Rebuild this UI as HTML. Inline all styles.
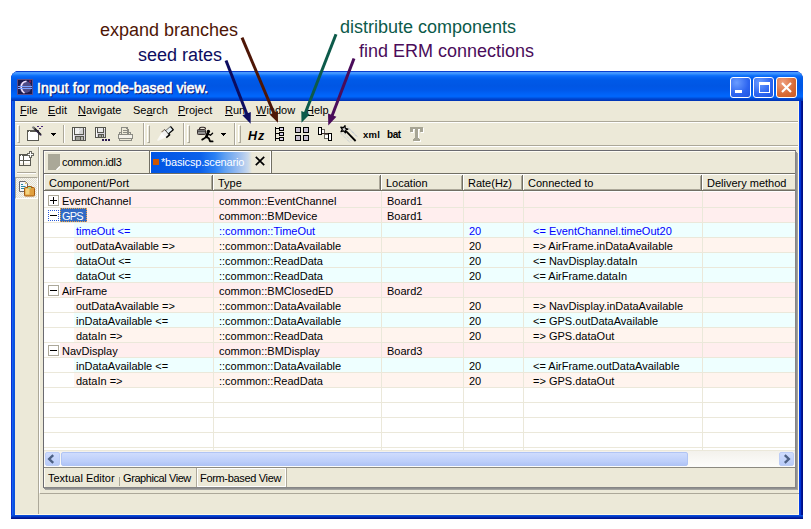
<!DOCTYPE html><html><head><meta charset="utf-8"><style>
*{margin:0;padding:0;box-sizing:border-box}
html,body{width:811px;height:529px;overflow:hidden;background:#fff}
body{position:relative;font-family:"Liberation Sans",sans-serif;font-size:11px;color:#000}
.a{position:absolute}
.t{position:absolute;white-space:nowrap;line-height:13px;font-size:11px}
.ann{position:absolute;font-size:18px;white-space:nowrap;line-height:1}
.grip{position:absolute;top:125px;width:3px;height:18px;border-left:1px solid #fff;border-top:1px solid #fff;border-right:1px solid #aca899;border-bottom:1px solid #aca899}
.sep{position:absolute;top:123px;width:2px;height:22px;border-left:1px solid #aca899;border-right:1px solid #fff}
.u{text-decoration:underline}
</style></head><body>
<div class="ann" style="left:100px;top:21px;color:#4e1606">expand branches</div>
<div class="ann" style="left:138px;top:46px;color:#0c0c60">seed rates</div>
<div class="ann" style="left:340px;top:18px;color:#0c5a4a">distribute components</div>
<div class="ann" style="left:359px;top:42px;color:#4a0c5a">find ERM connections</div>
<div class="a" style="left:11px;top:71px;width:792px;height:448px;background:#001a98;border-radius:8px 8px 0 0"></div>
<div class="a" style="left:11px;top:71px;width:791px;height:447px;background:#0a2fd0;border-radius:8px 8px 0 0"></div>
<div class="a" style="left:12px;top:72px;width:789px;height:445px;background:#1660f0;border-radius:7px 7px 0 0"></div>
<div class="a" style="left:13px;top:73px;width:787px;height:443px;background:#0a52e0;border-radius:6px 6px 0 0"></div>
<div class="a" style="left:801px;top:80px;width:2px;height:439px;background:linear-gradient(90deg,#0018a0,#000c80)"></div>
<div class="a" style="left:799px;top:100px;width:2px;height:419px;background:linear-gradient(90deg,#0040f0,#0030d0)"></div>
<div class="a" style="left:11px;top:515px;width:792px;height:4px;background:linear-gradient(#0852e0,#0844d2 1px,#0030b8 2px,#001a98 3px,#000c80)"></div>
<div class="a" style="left:11px;top:71px;width:792px;height:30px;border-radius:8px 8px 0 0;background:linear-gradient(#0a3fd0 0px,#0a3fd0 1px,#4a9cff 1px,#3a90ff 3px,#1478fc 4px,#0664f4 6px,#005ae8 9px,#0056e4 15px,#0058ea 19px,#0060f4 22px,#0066fc 25px,#0064f8 26px,#0050dc 27px,#0040c8 28.5px,#0030b0 30px)"></div>
<svg class="a" style="left:17px;top:79px" width="16" height="16" viewBox="0 0 16 16"><rect x="0.5" y="0.5" width="15" height="15" fill="#1c1a4c" stroke="#5a4a8a"/><circle cx="8.5" cy="8" r="6" fill="#4e4c88"/><path d="M9.5 2.3 Q4.5 3 4.2 8 Q4.5 12.5 7.5 14" stroke="#f4e4ff" stroke-width="1.6" fill="none"/><rect x="1" y="7" width="14" height="1" fill="#7aa0ff"/><rect x="1" y="9" width="14" height="1" fill="#7aa0ff"/><rect x="12" y="1.5" width="2" height="2" fill="#8a1a50"/></svg>
<div class="t" style="left:38px;top:82px;font-size:14px;line-height:15px;letter-spacing:0.12px;-webkit-text-stroke:0.6px #0a1a70;color:#0a1a70">Input for mode-based view.</div>
<div class="t" style="left:37px;top:81px;font-size:14px;line-height:15px;letter-spacing:0.12px;-webkit-text-stroke:0.6px #fff;color:#fff">Input for mode-based view.</div>
<div class="a" style="left:730px;top:77px;width:21px;height:21px;border:1px solid #fff;border-radius:3px;background:radial-gradient(circle at 30% 25%,#6a9cff,#2c64f0 60%,#1f56e0)"></div>
<div class="a" style="left:753px;top:77px;width:21px;height:21px;border:1px solid #fff;border-radius:3px;background:radial-gradient(circle at 30% 25%,#6a9cff,#2c64f0 60%,#1f56e0)"></div>
<div class="a" style="left:776px;top:77px;width:21px;height:21px;border:1px solid #fff;border-radius:3px;background:radial-gradient(circle at 30% 25%,#f0a080,#d86a35 60%,#c85a25)"></div>
<div class="a" style="left:735px;top:90px;width:7px;height:3px;background:#fff"></div>
<div class="a" style="left:759px;top:82px;width:11px;height:11px;border:1px solid #fff;border-top-width:3px"></div>
<svg class="a" style="left:776px;top:77px" width="21" height="21"><path d="M6 6 L15 15 M15 6 L6 15" stroke="#fff" stroke-width="2.2"/></svg>
<div class="a" style="left:15px;top:101px;width:784px;height:414px;background:#ece9d8"></div>
<div class="t" style="left:20px;top:104px"><span class="u">F</span>ile</div>
<div class="t" style="left:48px;top:104px"><span class="u">E</span>dit</div>
<div class="t" style="left:78px;top:104px"><span class="u">N</span>avigate</div>
<div class="t" style="left:133px;top:104px">Se<span class="u">a</span>rch</div>
<div class="t" style="left:178px;top:104px"><span class="u">P</span>roject</div>
<div class="t" style="left:225px;top:104px"><span class="u">R</span>un</div>
<div class="t" style="left:256px;top:104px"><span class="u">W</span>indow</div>
<div class="t" style="left:306px;top:104px"><span class="u">H</span>elp</div>
<div class="a" style="left:15px;top:121px;width:784px;height:1px;background:#aca899"></div>
<div class="a" style="left:15px;top:122px;width:784px;height:1px;background:#fff"></div>
<div class="a" style="left:15px;top:145px;width:784px;height:1px;background:#aca899"></div>
<div class="a" style="left:15px;top:146px;width:784px;height:1px;background:#fff"></div>
<div class="grip" style="left:17px"></div>
<div class="grip" style="left:147px"></div>
<div class="grip" style="left:187px"></div>
<div class="grip" style="left:238px"></div>
<div class="a" style="left:63px;top:125px;width:1px;height:18px;background:#aca899"></div>
<div class="a" style="left:64px;top:125px;width:1px;height:18px;background:#fff"></div>
<div class="sep" style="left:143px"></div>
<div class="sep" style="left:183px"></div>
<div class="sep" style="left:234px"></div>
<svg class="a" style="left:26px;top:126px" width="18" height="16" viewBox="0 0 18 16" shape-rendering="crispEdges"><rect x="1" y="4" width="12" height="11" fill="#5a5a52"/><rect x="2" y="6" width="10" height="8" fill="#fff"/><rect x="2" y="5" width="10" height="1" fill="#5a5a52"/><rect x="3" y="5" width="1" height="1" fill="#fff"/></svg>
<svg class="a" style="left:26px;top:126px" width="18" height="16" viewBox="0 0 18 16" ><line x1="7.5" y1="1.5" x2="15" y2="9" stroke="#1a1a1a" stroke-width="2"/><line x1="6.5" y1="0.8" x2="8.5" y2="2.8" stroke="#808080" stroke-width="2"/><line x1="9" y1="3.5" x2="15.5" y2="10" stroke="#5a3a90" stroke-width="0.6"/><rect x="11" y="0" width="2" height="1" fill="#4a2a7a"/><rect x="15" y="0" width="2" height="1" fill="#4a2a7a"/><rect x="13" y="2" width="2" height="1" fill="#4a2a7a"/></svg>
<svg class="a" style="left:51px;top:133px" width="5" height="3" viewBox="0 0 5 3" shape-rendering="crispEdges"><rect x="0" y="0" width="5" height="1" fill="#000"/><rect x="1" y="1" width="3" height="1" fill="#000"/><rect x="2" y="2" width="1" height="1" fill="#000"/></svg>
<svg class="a" style="left:72px;top:127px" width="14" height="14" viewBox="0 0 14 14" shape-rendering="crispEdges"><rect x="0" y="0" width="14" height="14" fill="#55554e"/><rect x="1" y="1" width="12" height="12" fill="#d8d4dc"/><rect x="1" y="1" width="1" height="12" fill="#fafafa"/><rect x="2" y="0" width="10" height="8" fill="#55554e"/><rect x="3" y="1" width="8" height="6" fill="#f0f0f0"/><rect x="7" y="1" width="4" height="6" fill="#d4d4d4"/><rect x="12" y="1" width="1" height="1" fill="#fff"/><rect x="3" y="9" width="9" height="5" fill="#55554e"/><rect x="4" y="10" width="4" height="3" fill="#a0a09a"/><rect x="9" y="10" width="2" height="3" fill="#b8b8b4"/></svg>
<svg class="a" style="left:72px;top:127px" width="14" height="14" viewBox="0 0 14 14" ><line x1="5" y1="6" x2="10" y2="1.5" stroke="#fff" stroke-width="1" stroke-dasharray="1 0.5"/></svg>
<svg class="a" style="left:95px;top:127px" width="16" height="15" viewBox="0 0 16 15" shape-rendering="crispEdges"><rect x="0" y="0" width="11" height="11" fill="#55554e"/><rect x="1" y="1" width="9" height="9" fill="#d8d4dc"/><rect x="1" y="1" width="1" height="9" fill="#fafafa"/><rect x="2" y="0" width="7" height="6" fill="#55554e"/><rect x="3" y="1" width="5" height="4" fill="#e8e8e8"/><rect x="9" y="1" width="1" height="1" fill="#fff"/><rect x="3" y="7" width="6" height="4" fill="#55554e"/><rect x="4" y="8" width="2" height="2" fill="#a0a09a"/><rect x="7" y="8" width="1" height="2" fill="#b8b8b4"/><rect x="7" y="12" width="2" height="2" fill="#2a1a50"/><rect x="10" y="12" width="2" height="2" fill="#2a1a50"/><rect x="13" y="12" width="2" height="2" fill="#2a1a50"/></svg>
<svg class="a" style="left:118px;top:127px" width="15" height="14" viewBox="0 0 15 14" shape-rendering="crispEdges"><rect x="3" y="0" width="7" height="1" fill="#8c8c84"/><rect x="3" y="0" width="1" height="7" fill="#8c8c84"/><rect x="9" y="1" width="1" height="6" fill="#8c8c84"/><rect x="10" y="2" width="1" height="5" fill="#8c8c84"/><rect x="5" y="3" width="4" height="1" fill="#8c8c84"/><rect x="5" y="5" width="4" height="1" fill="#8c8c84"/><rect x="8" y="1" width="1" height="1" fill="#8c8c84"/><rect x="1" y="5" width="3" height="1" fill="#8c8c84"/><rect x="1" y="5" width="1" height="2" fill="#8c8c84"/><rect x="10" y="5" width="3" height="1" fill="#8c8c84"/><rect x="12" y="5" width="1" height="2" fill="#8c8c84"/><rect x="5" y="7" width="4" height="1" fill="#8c8c84"/><rect x="0" y="7" width="15" height="1" fill="#8c8c84"/><rect x="0" y="7" width="1" height="5" fill="#8c8c84"/><rect x="14" y="7" width="1" height="5" fill="#8c8c84"/><rect x="0" y="11" width="15" height="1" fill="#8c8c84"/><rect x="1" y="8" width="13" height="3" fill="#f4f2ea"/><rect x="1" y="12" width="1" height="2" fill="#8c8c84"/><rect x="13" y="12" width="1" height="2" fill="#8c8c84"/><rect x="1" y="13" width="13" height="1" fill="#8c8c84"/></svg>
<svg class="a" style="left:150px;top:120px" width="30" height="26" viewBox="0 0 30 26" ><defs><linearGradient id="bm" x1="0" x2="1"><stop offset="0" stop-color="#ffffff" stop-opacity="0.6"/><stop offset="1" stop-color="#fdfdfd"/></linearGradient></defs><g transform="translate(7.5,20.5) rotate(-41)"><polygon points="0,-0.6 8.5,-3.2 8.5,3.2 0,0.6" fill="url(#bm)"/><rect x="8.5" y="-3.6" width="4.5" height="7.2" fill="#f2f2f2"/><line x1="8.5" y1="-3.6" x2="13" y2="-3.6" stroke="#8a7a6a" stroke-width="1"/><line x1="8.5" y1="3.6" x2="13.5" y2="3.6" stroke="#000" stroke-width="1.4"/><line x1="13" y1="3.6" x2="13" y2="1.5" stroke="#000" stroke-width="1.4"/><rect x="13" y="-2" width="6" height="4" fill="#e4eef2"/><line x1="13" y1="2.2" x2="19" y2="2.2" stroke="#000" stroke-width="1.3"/><line x1="19" y1="-2.2" x2="19" y2="2.5" stroke="#000" stroke-width="1.3"/><line x1="13" y1="-2.1" x2="19" y2="-2.1" stroke="#5a5a5a" stroke-width="0.8"/><line x1="12.6" y1="-3.6" x2="12.6" y2="3.6" stroke="#2a2a2a" stroke-width="0.8"/></g></svg>
<svg class="a" style="left:194px;top:124px" width="22" height="20" viewBox="0 0 22 20" ><path d="M5.5 5.2 Q5.5 3.3 7.5 3.3 H9.5 Q11.5 3.3 11.5 5.2" stroke="#2a2020" stroke-width="1.1" fill="none"/><rect x="3.5" y="5.5" width="8" height="5" rx="0.8" fill="#a4a4a4" stroke="#3a3030" stroke-width="1"/><rect x="3.2" y="6.6" width="8.6" height="1.1" fill="#303030"/><rect x="4" y="8.5" width="7" height="1.5" fill="#8a8a8a"/><circle cx="14.4" cy="7.4" r="1.7" fill="#000"/><path d="M13.8 9.3 L12.4 12.8" stroke="#000" stroke-width="2.8" stroke-linecap="round"/><path d="M14 10 L16.5 11.2 L18.6 9.2" stroke="#000" stroke-width="1.3" fill="none" stroke-linecap="round"/><path d="M12.4 12.8 L10 14.6 L8.2 15.6" stroke="#000" stroke-width="1.8" fill="none" stroke-linecap="round"/><path d="M12.4 12.8 L15 14.6 L16 17.3 L18.6 17.4" stroke="#000" stroke-width="1.8" fill="none" stroke-linecap="round" stroke-linejoin="round"/></svg>
<svg class="a" style="left:221px;top:133px" width="5" height="3" viewBox="0 0 5 3" shape-rendering="crispEdges"><rect x="0" y="0" width="5" height="1" fill="#000"/><rect x="1" y="1" width="3" height="1" fill="#000"/><rect x="2" y="2" width="1" height="1" fill="#000"/></svg>
<div class="t" style="left:248px;top:129px;font-weight:bold;font-style:italic;font-size:12.5px;line-height:14px;letter-spacing:1px">Hz</div>
<svg class="a" style="left:275px;top:127px" width="10" height="14" viewBox="0 0 10 14" shape-rendering="crispEdges"><rect x="0" y="0" width="1" height="14" fill="#000"/><rect x="1" y="1" width="3" height="1" fill="#000"/><rect x="1" y="6" width="3" height="1" fill="#000"/><rect x="1" y="11" width="3" height="1" fill="#000"/><rect x="4" y="0" width="5" height="4" fill="#000"/><rect x="5" y="1" width="3" height="2" fill="#d8d0e8"/><rect x="4" y="5" width="5" height="4" fill="#000"/><rect x="5" y="6" width="3" height="2" fill="#d8d0e8"/><rect x="4" y="10" width="5" height="4" fill="#000"/><rect x="5" y="11" width="3" height="2" fill="#d8d0e8"/></svg>
<svg class="a" style="left:295px;top:127px" width="14" height="14" viewBox="0 0 14 14" shape-rendering="crispEdges"><rect x="0" y="0" width="6" height="6" fill="#000"/><rect x="1" y="1" width="4" height="4" fill="#c8c0d0"/><rect x="0" y="8" width="6" height="6" fill="#000"/><rect x="1" y="9" width="4" height="4" fill="#c8c0d0"/><rect x="8" y="0" width="6" height="6" fill="#000"/><rect x="9" y="1" width="4" height="4" fill="#c8c0d0"/><rect x="8" y="8" width="6" height="6" fill="#000"/><rect x="9" y="9" width="4" height="4" fill="#c8c0d0"/></svg>
<svg class="a" style="left:318px;top:127px" width="14" height="14" viewBox="0 0 14 14" shape-rendering="crispEdges"><rect x="3" y="2" width="4" height="5" fill="#6a6a60"/><rect x="4" y="3" width="2" height="3" fill="#fff"/><rect x="6" y="7" width="5" height="5" fill="#6a6a60"/><rect x="7" y="8" width="3" height="3" fill="#fff"/><rect x="4" y="6" width="7" height="1" fill="#3a2a2a"/><rect x="0" y="0" width="4" height="8" fill="#000"/><rect x="1" y="1" width="2" height="6" fill="#fff"/><rect x="10" y="6" width="4" height="8" fill="#000"/><rect x="11" y="7" width="2" height="6" fill="#fff"/></svg>
<svg class="a" style="left:338px;top:124px" width="20" height="20" viewBox="0 0 20 20" ><path d="M2.5 9 L12.5 19 M4 7.5 L14 17.5 M9 2.5 L19 12.5 M10.5 4 L19.5 13" stroke="#b4c0d0" stroke-width="1" stroke-dasharray="1 1"/><path d="M8 7.2 L17.6 17" stroke="#000" stroke-width="1.8"/><polygon points="7.01,1.53 7.32,4.23 9.89,5.10 7.43,6.23 7.40,8.94 5.56,6.94 2.97,7.75 4.30,5.39 2.73,3.18 5.39,3.71" fill="#d0d0d0" stroke="#000" stroke-width="1.2" stroke-linejoin="round"/></svg>
<div class="t" style="left:363px;top:129px;font-weight:bold;font-size:9.5px;line-height:12px;letter-spacing:0.2px">xml</div>
<div class="t" style="left:387px;top:128px;font-weight:bold;font-size:10px;line-height:13px;letter-spacing:-0.4px">bat</div>
<svg class="a" style="left:410px;top:127px" width="15" height="16" viewBox="0 0 15 16" shape-rendering="crispEdges"><rect x="1" y="1" width="13" height="2" fill="#ffffff"/><rect x="1" y="3" width="3" height="3" fill="#ffffff"/><rect x="11" y="3" width="3" height="3" fill="#ffffff"/><rect x="6" y="3" width="3" height="11" fill="#ffffff"/><rect x="5" y="12" width="5" height="1" fill="#ffffff"/><rect x="4" y="13" width="7" height="2" fill="#ffffff"/><rect x="0" y="0" width="13" height="2" fill="#a6a494"/><rect x="0" y="2" width="3" height="3" fill="#a6a494"/><rect x="10" y="2" width="3" height="3" fill="#a6a494"/><rect x="5" y="2" width="3" height="11" fill="#a6a494"/><rect x="4" y="11" width="5" height="1" fill="#a6a494"/><rect x="3" y="12" width="7" height="2" fill="#a6a494"/></svg>
<div class="a" style="left:38px;top:147px;width:1px;height:367px;background:#aca899"></div>
<div class="a" style="left:39px;top:147px;width:1px;height:346px;background:#fff"></div>
<svg class="a" style="left:19px;top:154px" width="12" height="12" viewBox="0 0 12 12" shape-rendering="crispEdges"><rect x="0" y="0" width="12" height="12" fill="#5a5a52"/><rect x="1" y="2" width="10" height="9" fill="#fff"/><rect x="1" y="1" width="10" height="1" fill="#5a5a52"/><rect x="2" y="1" width="1" height="1" fill="#fff"/><rect x="4" y="2" width="1" height="9" fill="#5a5a52"/><rect x="1" y="6" width="10" height="1" fill="#5a5a52"/><rect x="1" y="9" width="3" height="2" fill="#f4efe4"/><rect x="5" y="9" width="6" height="2" fill="#f4efe4"/></svg>
<svg class="a" style="left:27px;top:151px" width="7" height="7" viewBox="0 0 7 7" shape-rendering="crispEdges"><rect x="2" y="0" width="3" height="7" fill="#6a6a62"/><rect x="0" y="2" width="7" height="3" fill="#6a6a62"/><rect x="3" y="1" width="1" height="5" fill="#fff"/><rect x="1" y="3" width="5" height="1" fill="#fff"/></svg>
<div class="a" style="left:17px;top:172px;width:19px;height:1px;background:#aca899"></div>
<div class="a" style="left:17px;top:173px;width:19px;height:1px;background:#fff"></div>
<div class="a" style="left:15px;top:177px;width:23px;height:22px;border-top:1px solid #aca899;border-left:1px solid #aca899;border-right:1px solid #fff;border-bottom:1px solid #fff;background:repeating-conic-gradient(#f7f6f0 0 25%,#e2dfd0 0 50%) 0 0/2px 2px"></div>
<svg class="a" style="left:19px;top:181px" width="17" height="16" viewBox="0 0 17 16" ><path d="M0.5 0.5 H6.5 L8.5 2.5 V10.5 H0.5 Z" fill="#f4f6fa" stroke="#6a6a70"/><circle cx="6.8" cy="2.2" r="0.9" fill="#e8c060"/><path d="M2 3.5 H4 M2 5.5 H6.5 M2 7.5 H6.5" stroke="#2a8aa0" stroke-width="1"/><rect x="5.5" y="6.5" width="10" height="8.5" rx="1" fill="#e0a040" stroke="#a85c10"/><rect x="6.5" y="7.5" width="4" height="6" fill="#f8e090" opacity="0.8"/><path d="M8.5 6.5 V5.5 H12.5 V6.5" stroke="#a85c10" fill="none"/><rect x="9" y="6" width="3" height="1.5" fill="#a0d890"/></svg>
<div class="a" style="left:45px;top:153px;width:753px;height:337px;background:#a4a4a0"></div>
<div class="a" style="left:44px;top:152px;width:753px;height:337px;background:#909090"></div>
<div class="a" style="left:43px;top:150px;width:753px;height:338px;background:#ece9d8;border-left:1px solid #6a6a70;border-top:1px solid #6a6a70;border-right:1px solid #858585;border-bottom:1px solid #858585"></div>
<div class="a" style="left:44px;top:151px;width:751px;height:336px;border-left:1px solid #fffdf4;border-top:1px solid #fffdf4"></div>
<div class="a" style="left:798px;top:101px;width:1px;height:414px;background:#fff8e4"></div>
<div class="a" style="left:15px;top:514px;width:784px;height:1px;background:#fff8e4"></div>
<div class="a" style="left:44px;top:173px;width:751px;height:1px;background:#716f64"></div>
<div class="a" style="left:44px;top:174px;width:751px;height:1px;background:#fff"></div>
<svg class="a" style="left:48px;top:154px" width="12" height="16" viewBox="0 0 12 16" ><path d="M0 0 H12 V12 L8 16 H0 Z" fill="#aaa898"/><path d="M12 12.5 L8.5 16" stroke="#fff" stroke-width="1.2"/></svg>
<div class="t" style="left:62px;top:156px;font-size:11px;letter-spacing:-0.25px">common.idl3</div>
<div class="a" style="left:149px;top:150px;width:1px;height:23px;background:#716f64"></div>
<div class="a" style="left:150px;top:151px;width:121px;height:22px;background:#fff"></div>
<div class="a" style="left:149px;top:150px;width:123px;height:1px;background:#716f64"></div>
<div class="a" style="left:151px;top:152px;width:119px;height:21px;background:linear-gradient(90deg,#0054e3 0px,#0a60ea 49px,#2a80f4 64px,#60a0f0 74px,#98bcf0 87px,#c8d8ec 97px,#ece9d8 101px)"></div>
<div class="a" style="left:271px;top:150px;width:1px;height:23px;background:#716f64"></div>
<div class="a" style="left:153px;top:159px;width:6px;height:6px;background:#cc5500"></div>
<div class="t" style="left:161px;top:156px;color:#fff;letter-spacing:-0.18px">*basicsp.scenario</div>
<svg class="a" style="left:255px;top:156px" width="10" height="10" viewBox="0 0 10 10" ><path d="M0.8 0.8 L9.2 9.2 M9.2 0.8 L0.8 9.2" stroke="#000" stroke-width="1.7"/></svg>
<div class="a" style="left:44px;top:175px;width:751px;height:15px;background:#ece9d8"></div>
<div class="a" style="left:44px;top:189px;width:751px;height:1px;background:#aca899"></div>
<div class="a" style="left:44px;top:190px;width:751px;height:1px;background:#716f64"></div>
<div class="t" style="left:49px;top:177px">Component/Port</div>
<div class="a" style="left:211px;top:176px;width:1px;height:13px;background:#aca899"></div>
<div class="a" style="left:212px;top:175px;width:1px;height:15px;background:#716f64"></div>
<div class="a" style="left:213px;top:175px;width:1px;height:15px;background:#fff"></div>
<div class="t" style="left:218px;top:177px">Type</div>
<div class="a" style="left:379px;top:176px;width:1px;height:13px;background:#aca899"></div>
<div class="a" style="left:380px;top:175px;width:1px;height:15px;background:#716f64"></div>
<div class="a" style="left:381px;top:175px;width:1px;height:15px;background:#fff"></div>
<div class="t" style="left:386px;top:177px">Location</div>
<div class="a" style="left:461px;top:176px;width:1px;height:13px;background:#aca899"></div>
<div class="a" style="left:462px;top:175px;width:1px;height:15px;background:#716f64"></div>
<div class="a" style="left:463px;top:175px;width:1px;height:15px;background:#fff"></div>
<div class="t" style="left:468px;top:177px">Rate(Hz)</div>
<div class="a" style="left:521px;top:176px;width:1px;height:13px;background:#aca899"></div>
<div class="a" style="left:522px;top:175px;width:1px;height:15px;background:#716f64"></div>
<div class="a" style="left:523px;top:175px;width:1px;height:15px;background:#fff"></div>
<div class="t" style="left:528px;top:177px">Connected to</div>
<div class="a" style="left:700px;top:176px;width:1px;height:13px;background:#aca899"></div>
<div class="a" style="left:701px;top:175px;width:1px;height:15px;background:#716f64"></div>
<div class="a" style="left:702px;top:175px;width:1px;height:15px;background:#fff"></div>
<div class="t" style="left:707px;top:177px">Delivery method</div>
<div class="a" style="left:44px;top:175px;width:1px;height:15px;background:#fff"></div>
<div class="a" style="left:44px;top:191px;width:751px;height:260px;background:#fff"></div>
<div class="a" style="left:60px;top:192px;width:735px;height:15px;background:#ffeeee"></div>
<div class="a" style="left:60px;top:207px;width:735px;height:15px;background:#ffeeee"></div>
<div class="a" style="left:74px;top:222px;width:721px;height:15px;background:#eeffff"></div>
<div class="a" style="left:74px;top:237px;width:721px;height:15px;background:#fff4ee"></div>
<div class="a" style="left:74px;top:252px;width:721px;height:15px;background:#eeffff"></div>
<div class="a" style="left:74px;top:267px;width:721px;height:15px;background:#eeffff"></div>
<div class="a" style="left:60px;top:282px;width:735px;height:15px;background:#ffeeee"></div>
<div class="a" style="left:74px;top:297px;width:721px;height:15px;background:#fff4ee"></div>
<div class="a" style="left:74px;top:312px;width:721px;height:15px;background:#eeffff"></div>
<div class="a" style="left:74px;top:327px;width:721px;height:15px;background:#fff4ee"></div>
<div class="a" style="left:60px;top:342px;width:735px;height:15px;background:#ffeeee"></div>
<div class="a" style="left:74px;top:357px;width:721px;height:15px;background:#eeffff"></div>
<div class="a" style="left:74px;top:372px;width:721px;height:15px;background:#fff4ee"></div>
<div class="a" style="left:44px;top:207px;width:751px;height:1px;background:#ebe8da"></div>
<div class="a" style="left:44px;top:222px;width:751px;height:1px;background:#ebe8da"></div>
<div class="a" style="left:44px;top:237px;width:751px;height:1px;background:#ebe8da"></div>
<div class="a" style="left:44px;top:252px;width:751px;height:1px;background:#ebe8da"></div>
<div class="a" style="left:44px;top:267px;width:751px;height:1px;background:#ebe8da"></div>
<div class="a" style="left:44px;top:282px;width:751px;height:1px;background:#ebe8da"></div>
<div class="a" style="left:44px;top:297px;width:751px;height:1px;background:#ebe8da"></div>
<div class="a" style="left:44px;top:312px;width:751px;height:1px;background:#ebe8da"></div>
<div class="a" style="left:44px;top:327px;width:751px;height:1px;background:#ebe8da"></div>
<div class="a" style="left:44px;top:342px;width:751px;height:1px;background:#ebe8da"></div>
<div class="a" style="left:44px;top:357px;width:751px;height:1px;background:#ebe8da"></div>
<div class="a" style="left:44px;top:372px;width:751px;height:1px;background:#ebe8da"></div>
<div class="a" style="left:44px;top:387px;width:751px;height:1px;background:#ebe8da"></div>
<div class="a" style="left:44px;top:402px;width:751px;height:1px;background:#ebe8da"></div>
<div class="a" style="left:44px;top:417px;width:751px;height:1px;background:#ebe8da"></div>
<div class="a" style="left:44px;top:432px;width:751px;height:1px;background:#ebe8da"></div>
<div class="a" style="left:44px;top:447px;width:751px;height:1px;background:#ebe8da"></div>
<div class="a" style="left:44px;top:450px;width:751px;height:1px;background:#ebe8da"></div>
<div class="a" style="left:213px;top:191px;width:1px;height:260px;background:#ebe8da"></div>
<div class="a" style="left:381px;top:191px;width:1px;height:260px;background:#ebe8da"></div>
<div class="a" style="left:463px;top:191px;width:1px;height:260px;background:#ebe8da"></div>
<div class="a" style="left:523px;top:191px;width:1px;height:260px;background:#ebe8da"></div>
<div class="a" style="left:702px;top:191px;width:1px;height:260px;background:#ebe8da"></div>
<div class="a" style="left:48px;top:195px;width:11px;height:11px;border:1px solid #aca899;background:#fff"></div>
<div class="a" style="left:50px;top:200px;width:7px;height:1px;background:#000"></div>
<div class="a" style="left:53px;top:197px;width:1px;height:7px;background:#000"></div>
<div class="t" style="left:62px;top:195px;color:#000">EventChannel</div>
<div class="t" style="left:219px;top:195px;color:#000">common::EventChannel</div>
<div class="t" style="left:387px;top:195px;color:#000">Board1</div>
<div class="a" style="left:48px;top:210px;width:11px;height:11px;border:1px dotted #2a5ad8;background:#fff"></div>
<div class="a" style="left:50px;top:215px;width:7px;height:1px;background:#000"></div>
<div class="a" style="left:60px;top:208px;width:27px;height:14px;background:#316ac5;border:1px dotted #f0a040"></div>
<div class="t" style="left:62px;top:210px;color:#fff;letter-spacing:-0.8px">GPS</div>
<div class="t" style="left:219px;top:210px;color:#000">common::BMDevice</div>
<div class="t" style="left:387px;top:210px;color:#000">Board1</div>
<div class="t" style="left:76px;top:225px;color:#0000ff">timeOut &lt;=</div>
<div class="t" style="left:219px;top:225px;color:#0000ff">::common::TimeOut</div>
<div class="t" style="left:469px;top:225px;color:#0000ff">20</div>
<div class="t" style="left:533px;top:225px;color:#0000ff">&lt;= EventChannel.timeOut20</div>
<div class="t" style="left:76px;top:240px;color:#000">outDataAvailable =&gt;</div>
<div class="t" style="left:219px;top:240px;color:#000">::common::DataAvailable</div>
<div class="t" style="left:469px;top:240px;color:#000">20</div>
<div class="t" style="left:533px;top:240px;color:#000">=&gt; AirFrame.inDataAvailable</div>
<div class="t" style="left:76px;top:255px;color:#000">dataOut &lt;=</div>
<div class="t" style="left:219px;top:255px;color:#000">::common::ReadData</div>
<div class="t" style="left:469px;top:255px;color:#000">20</div>
<div class="t" style="left:533px;top:255px;color:#000">&lt;= NavDisplay.dataIn</div>
<div class="t" style="left:76px;top:270px;color:#000">dataOut &lt;=</div>
<div class="t" style="left:219px;top:270px;color:#000">::common::ReadData</div>
<div class="t" style="left:469px;top:270px;color:#000">20</div>
<div class="t" style="left:533px;top:270px;color:#000">&lt;= AirFrame.dataIn</div>
<div class="a" style="left:48px;top:285px;width:11px;height:11px;border:1px solid #aca899;background:#fff"></div>
<div class="a" style="left:50px;top:290px;width:7px;height:1px;background:#000"></div>
<div class="t" style="left:62px;top:285px;color:#000">AirFrame</div>
<div class="t" style="left:219px;top:285px;color:#000">common::BMClosedED</div>
<div class="t" style="left:387px;top:285px;color:#000">Board2</div>
<div class="t" style="left:76px;top:300px;color:#000">outDataAvailable =&gt;</div>
<div class="t" style="left:219px;top:300px;color:#000">::common::DataAvailable</div>
<div class="t" style="left:469px;top:300px;color:#000">20</div>
<div class="t" style="left:533px;top:300px;color:#000">=&gt; NavDisplay.inDataAvailable</div>
<div class="t" style="left:76px;top:315px;color:#000">inDataAvailable &lt;=</div>
<div class="t" style="left:219px;top:315px;color:#000">::common::DataAvailable</div>
<div class="t" style="left:469px;top:315px;color:#000">20</div>
<div class="t" style="left:533px;top:315px;color:#000">&lt;= GPS.outDataAvailable</div>
<div class="t" style="left:76px;top:330px;color:#000">dataIn =&gt;</div>
<div class="t" style="left:219px;top:330px;color:#000">::common::ReadData</div>
<div class="t" style="left:469px;top:330px;color:#000">20</div>
<div class="t" style="left:533px;top:330px;color:#000">=&gt; GPS.dataOut</div>
<div class="a" style="left:48px;top:345px;width:11px;height:11px;border:1px solid #aca899;background:#fff"></div>
<div class="a" style="left:50px;top:350px;width:7px;height:1px;background:#000"></div>
<div class="t" style="left:62px;top:345px;color:#000">NavDisplay</div>
<div class="t" style="left:219px;top:345px;color:#000">common::BMDisplay</div>
<div class="t" style="left:387px;top:345px;color:#000">Board3</div>
<div class="t" style="left:76px;top:360px;color:#000">inDataAvailable &lt;=</div>
<div class="t" style="left:219px;top:360px;color:#000">::common::DataAvailable</div>
<div class="t" style="left:469px;top:360px;color:#000">20</div>
<div class="t" style="left:533px;top:360px;color:#000">&lt;= AirFrame.outDataAvailable</div>
<div class="t" style="left:76px;top:375px;color:#000">dataIn =&gt;</div>
<div class="t" style="left:219px;top:375px;color:#000">::common::ReadData</div>
<div class="t" style="left:469px;top:375px;color:#000">20</div>
<div class="t" style="left:533px;top:375px;color:#000">=&gt; GPS.dataOut</div>
<div class="a" style="left:44px;top:451px;width:751px;height:16px;background:linear-gradient(#f3f1ec,#fdfdfb)"></div>
<div class="a" style="left:44px;top:467px;width:751px;height:1px;background:#8c8a80"></div>
<div class="a" style="left:45px;top:452px;width:15px;height:14px;border:1px solid #bccdf6;border-radius:2px;background:linear-gradient(#cfdcfd,#b8cbf8)"></div>
<svg class="a" style="left:47px;top:454px" width="9" height="10" viewBox="0 0 9 10" ><path d="M6.2 1.2 L2.2 5 L6.2 8.8" stroke="#4d6185" stroke-width="2.4" fill="none"/></svg>
<div class="a" style="left:61px;top:452px;width:627px;height:14px;border:1px solid #b0c4f4;border-radius:2px;background:linear-gradient(#cfdcfd,#bccefa 70%,#b0c4f6)"></div>
<div class="a" style="left:779px;top:452px;width:15px;height:14px;border:1px solid #bccdf6;border-radius:2px;background:linear-gradient(#cfdcfd,#b8cbf8)"></div>
<svg class="a" style="left:782px;top:454px" width="9" height="10" viewBox="0 0 9 10" ><path d="M2.8 1.2 L6.8 5 L2.8 8.8" stroke="#4d6185" stroke-width="2.4" fill="none"/></svg>
<div class="t" style="left:48px;top:472px">Textual Editor</div>
<div class="a" style="left:119px;top:477px;width:1px;height:9px;background:#aca899"></div>
<div class="t" style="left:123px;top:472px;letter-spacing:-0.42px">Graphical View</div>
<div class="a" style="left:196px;top:468px;width:1px;height:19px;background:#aca899"></div>
<div class="a" style="left:286px;top:468px;width:1px;height:19px;background:#aca899"></div>
<div class="a" style="left:197px;top:468px;width:89px;height:19px;border:1px solid #fff"></div>
<div class="t" style="left:200px;top:472px;letter-spacing:-0.33px">Form-based View</div>
<div class="a" style="left:40px;top:493px;width:759px;height:1px;background:#aca899"></div>
<svg class="a" style="left:0;top:0" width="811" height="529"><line x1="226" y1="60.5" x2="247.0" y2="114.5" stroke="#0c0c60" stroke-width="3"/><polygon points="250.6,123.8 242.4,115.2 250.8,111.9" fill="#0c0c60"/><line x1="242" y1="37.6" x2="274.1" y2="113.6" stroke="#4e1606" stroke-width="3"/><polygon points="278.0,122.8 269.6,114.4 277.9,110.9" fill="#4e1606"/><line x1="336" y1="34.2" x2="305.1" y2="113.5" stroke="#0c5a4a" stroke-width="3"/><polygon points="301.5,122.8 301.3,110.9 309.7,114.2" fill="#0c5a4a"/><line x1="354" y1="58.5" x2="331.9" y2="116.2" stroke="#4a0c5a" stroke-width="3"/><polygon points="328.3,125.5 328.0,113.6 336.4,116.8" fill="#4a0c5a"/></svg>
</body></html>
